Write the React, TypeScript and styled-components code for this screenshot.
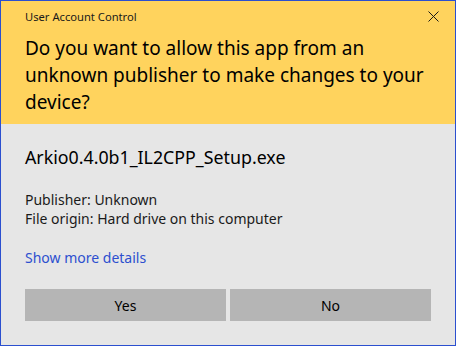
import React from "react";
import styled, { createGlobalStyle } from "styled-components";

const GlobalStyle = createGlobalStyle`
  html, body {
    margin: 0;
    padding: 0;
    background: #e6e6e6;
  }
  body {
    font-family: "Segoe UI", "Noto Sans", sans-serif;
    color: #000;
  }
`;

const Window = styled.div`
  width: 456px;
  height: 346px;
  box-sizing: border-box;
  border: 1px solid #2b4fcf;
  background: #e6e6e6;
  display: flex;
  flex-direction: column;
`;

const Header = styled.div`
  background: #ffd35d;
  height: 123px;
  flex-shrink: 0;
  box-sizing: border-box;
  padding: 0 0 0 24px;
  display: flex;
  flex-direction: column;
`;

const TitleBar = styled.div`
  display: flex;
  align-items: center;
  justify-content: space-between;
  height: 30px;
`;

const Title = styled.span`
  font-size: 11.2px;
  color: #1a1a1a;
`;

const CloseButton = styled.button`
  width: 44px;
  height: 32px;
  border: none;
  background: transparent;
  padding: 0;
  display: flex;
  align-items: center;
  justify-content: center;
`;

const Heading = styled.h1`
  margin: 4px 0 0 0;
  font-size: 19px;
  font-weight: 400;
  line-height: 27px;
  color: #000;
  padding-right: 20px;
`;

const Body = styled.div`
  flex: 1;
  padding: 22px 24px 0 24px;
  display: flex;
  flex-direction: column;
`;

const FileName = styled.div`
  font-size: 17.8px;
  line-height: 22px;
  color: #000;
`;

const Details = styled.div`
  margin-top: 22px;
  font-size: 14px;
  line-height: 19px;
  color: #1a1a1a;
`;

const Link = styled.a`
  margin-top: 20px;
  font-size: 14px;
  line-height: 19px;
  color: #2d4fcf;
  text-decoration: none;
  cursor: pointer;
`;

const Buttons = styled.div`
  margin-top: 22px;
  display: grid;
  grid-template-columns: 1fr 1fr;
  gap: 4px;
  width: 406px;
`;

const Button = styled.button`
  height: 32px;
  border: none;
  background: #b5b5b5;
  font-family: inherit;
  font-size: 14px;
  color: #000;
`;

function CloseIcon() {
  return (
    <svg width="11" height="11" viewBox="0 0 11 11">
      <path d="M0.5 0.5 L10.5 10.5 M10.5 0.5 L0.5 10.5" stroke="#1a1a1a" strokeWidth="1" />
    </svg>
  );
}

export default function App() {
  return (
    <Window>
      <GlobalStyle />
      <Header>
        <TitleBar>
          <Title>User Account Control</Title>
          <CloseButton aria-label="Close">
            <CloseIcon />
          </CloseButton>
        </TitleBar>
        <Heading>
          Do you want to allow this app from an unknown publisher to make changes to your device?
        </Heading>
      </Header>
      <Body>
        <FileName>Arkio0.4.0b1_IL2CPP_Setup.exe</FileName>
        <Details>
          <div>Publisher: Unknown</div>
          <div>File origin: Hard drive on this computer</div>
        </Details>
        <Link>Show more details</Link>
        <Buttons>
          <Button>Yes</Button>
          <Button>No</Button>
        </Buttons>
      </Body>
    </Window>
  );
}
